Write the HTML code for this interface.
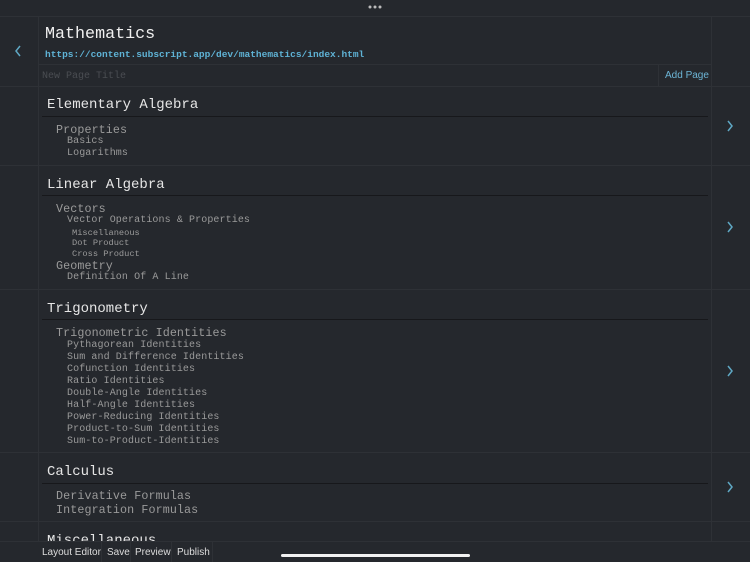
<!DOCTYPE html>
<html><head><meta charset="utf-8"><style>
*{margin:0;padding:0;box-sizing:border-box}
body{width:750px;height:562px;background:#25282d;position:relative;overflow:hidden;font-family:"Liberation Mono",monospace}
.a{position:absolute;white-space:pre;line-height:14px;transform:translateY(2px)}
.h{position:absolute;background:#2e3136;height:1px}
.v{position:absolute;background:#2e3136;width:1px}
.u{position:absolute;background:#17181b;height:1px;left:42px;width:666px}
.s{color:#e6e6e6;font-size:14px;left:47px;line-height:18px}
.l1{color:#9a9a9a;font-size:11.7px;left:56px;letter-spacing:0.1px}
.l2{color:#9a9a9a;font-size:10px;left:67px;letter-spacing:0.1px}
.l3{color:#9a9a9a;font-size:8.7px;left:72px}
.chev{position:absolute;left:726px}
.sans{font-family:'Liberation Sans',sans-serif}
</style></head><body>
<div class="h" style="left:0;top:16px;width:750px"></div>
<div class="v" style="left:38px;top:16px;height:525px"></div>
<div class="v" style="left:711px;top:16px;height:546px"></div>
<div class="h" style="left:38px;top:64px;width:673px"></div>
<div class="h" style="left:0;top:86px;width:750px"></div>
<div class="v" style="left:658px;top:64px;height:22px"></div>
<div class="h" style="left:0;top:165px;width:750px"></div>
<div class="h" style="left:0;top:289px;width:750px"></div>
<div class="h" style="left:0;top:452px;width:750px"></div>
<div class="h" style="left:0;top:521px;width:750px"></div>
<div class="h" style="left:0;top:541px;width:750px"></div>

<svg style="position:absolute;left:368px;top:5px" width="14" height="4"><circle cx="2" cy="2" r="1.5" fill="#bbb"/><circle cx="7" cy="2" r="1.5" fill="#bbb"/><circle cx="12" cy="2" r="1.5" fill="#bbb"/></svg>
<svg style="position:absolute;left:14px;top:45px" width="8" height="12"><path d="M6 1 L2 6 L6 11" stroke="#5fa8c4" stroke-width="1.5" fill="none"/></svg>
<div class="a" style="left:45px;top:23px;font-size:16.7px;line-height:20px;color:#f0f0f0">Mathematics</div>
<div class="a" style="left:45px;top:46px;font-size:9.5px;font-weight:bold;color:#5fb3d6">https://content.subscript.app/dev/mathematics/index.html</div>
<div class="a" style="left:42px;top:68px;font-size:10px;color:#4a4d52">New Page Title</div>
<div class="a sans" style="left:665px;top:67px;font-size:10px;color:#6cb5d6">Add Page</div>

<div class="a s" style="top:94px">Elementary Algebra</div>
<div class="u" style="top:116px"></div>
<div class="a l1" style="top:121px">Properties</div>
<div class="a l2" style="top:133px">Basics</div>
<div class="a l2" style="top:145px">Logarithms</div>

<div class="a s" style="top:174px">Linear Algebra</div>
<div class="u" style="top:195px"></div>
<div class="a l1" style="top:200px">Vectors</div>
<div class="a l2" style="top:212px">Vector Operations &amp; Properties</div>
<div class="a l3" style="top:224px">Miscellaneous</div>
<div class="a l3" style="top:234px">Dot Product</div>
<div class="a l3" style="top:245px">Cross Product</div>
<div class="a l1" style="top:257px">Geometry</div>
<div class="a l2" style="top:269px">Definition Of A Line</div>

<div class="a s" style="top:298px">Trigonometry</div>
<div class="u" style="top:319px"></div>
<div class="a l1" style="top:324px">Trigonometric Identities</div>
<div class="a l2" style="top:337px">Pythagorean Identities</div>
<div class="a l2" style="top:349px">Sum and Difference Identities</div>
<div class="a l2" style="top:361px">Cofunction Identities</div>
<div class="a l2" style="top:373px">Ratio Identities</div>
<div class="a l2" style="top:385px">Double-Angle Identities</div>
<div class="a l2" style="top:397px">Half-Angle Identities</div>
<div class="a l2" style="top:409px">Power-Reducing Identities</div>
<div class="a l2" style="top:421px">Product-to-Sum Identities</div>
<div class="a l2" style="top:433px">Sum-to-Product-Identities</div>

<div class="a s" style="top:461px">Calculus</div>
<div class="u" style="top:483px"></div>
<div class="a l1" style="top:487px">Derivative Formulas</div>
<div class="a l1" style="top:501px">Integration Formulas</div>

<div class="a s" style="top:530px;height:9px;overflow:hidden">Miscellaneous</div>

<svg class="chev" style="top:120px" width="8" height="12"><path d="M2 1 L6 6 L2 11" stroke="#5fa8c4" stroke-width="1.5" fill="none"/></svg>
<svg class="chev" style="top:221px" width="8" height="12"><path d="M2 1 L6 6 L2 11" stroke="#5fa8c4" stroke-width="1.5" fill="none"/></svg>
<svg class="chev" style="top:365px" width="8" height="12"><path d="M2 1 L6 6 L2 11" stroke="#5fa8c4" stroke-width="1.5" fill="none"/></svg>
<svg class="chev" style="top:481px" width="8" height="12"><path d="M2 1 L6 6 L2 11" stroke="#5fa8c4" stroke-width="1.5" fill="none"/></svg>

<div style="position:absolute;left:0;top:542px;width:750px;height:20px;background:#25282d"></div>
<div class="a sans" style="left:42px;top:544px;font-size:10px;color:#ddd">Layout Editor</div>
<div class="v" style="left:101px;top:541px;height:21px"></div>
<div class="a sans" style="left:107px;top:544px;font-size:10px;color:#ddd">Save</div>
<div class="v" style="left:130px;top:541px;height:21px"></div>
<div class="a sans" style="left:135px;top:544px;font-size:10px;color:#ddd">Preview</div>
<div class="v" style="left:171px;top:541px;height:21px"></div>
<div class="a sans" style="left:177px;top:544px;font-size:10px;color:#ddd">Publish</div>
<div class="v" style="left:212px;top:541px;height:21px"></div>
<div style="position:absolute;left:281px;top:554px;width:189px;height:3px;border-radius:2px;background:#f2f2f2"></div>
</body></html>
